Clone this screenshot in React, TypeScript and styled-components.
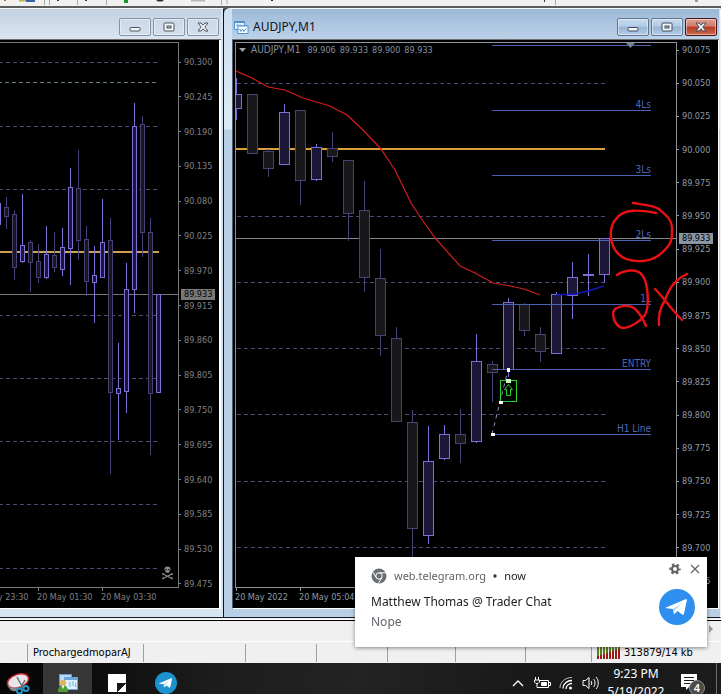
import React from "react";
import styled, { createGlobalStyle, css } from "styled-components";

const chartFont = '"DejaVu Sans Condensed", "Noto Sans", sans-serif';
const uiFont = '"Noto Sans", "Open Sans", sans-serif';

const GlobalStyle = createGlobalStyle`
  *, *::before, *::after { box-sizing: border-box; }
  html, body { margin: 0; padding: 0; }
  body { font-family: ${uiFont}; background: #f0f0f0; }
  button { font: inherit; padding: 0; margin: 0; border: 0; background: none; cursor: pointer; }
`;

const Desktop = styled.div`
  display: flex;
  flex-direction: column;
  width: 100%;
  height: 100vh;
  overflow: hidden;
`;

const Toolbar = styled.header`
  flex: 0 0 8px;
  display: flex;
  align-items: flex-start;
  overflow: hidden;
  background: #f1f1ef;
  border-bottom: 2px solid #5c5c5c;
  svg { display: block; flex: none; }
`;

const Workspace = styled.main`
  flex: 1;
  min-height: 0;
  display: grid;
  grid-template-columns: 224fr 497fr;
  grid-template-rows: minmax(0, 1fr);
  background: #44525f;
`;

const ChartWindow = styled.section<{ $active?: boolean }>`
  position: relative;
  min-width: 0;
  display: flex;
  flex-direction: column;
  border-bottom: 1px solid #1b2024;
  ${(p) =>
    p.$active
      ? css`
          padding: 0 1px 8px 8px;
          background: linear-gradient(#cfdff0 0, #dce9f5 120px, #b9cfe6 121px, #b9cfe6 100%);
          border-top-left-radius: 6px;
          border-top: 1px solid #f5f9fd;
          border-right: 1px solid #f4f4f4;
        `
      : css`
          padding: 0 2px 8px 0;
          background: #d7e4f1;
          border-right: 1px solid #101418;
          border-top: 1px solid #f5f9fd;
        `}
`;

const TitleBar = styled.header<{ $active?: boolean }>`
  flex: 0 0 31px;
  display: flex;
  align-items: center;
  gap: 4px;
  min-width: 0;
  padding: 4px 2px 0 2px;
  background: ${(p) =>
    p.$active ? "linear-gradient(#9db9d8, #bdd2ea)" : "linear-gradient(#c3d1e1, #dbe6f2)"};
`;

const Title = styled.h1`
  flex: 1;
  margin: 0;
  font-size: 12px;
  line-height: 16px;
  font-weight: 400;
  color: #10161c;
  white-space: nowrap;
`;

const WindowButtons = styled.div`
  display: flex;
  gap: 2px;
  margin-left: auto;
`;

const WindowButton = styled.button<{ $tone: "idle" | "blue" | "red" }>`
  display: flex;
  align-items: center;
  justify-content: center;
  width: 32px;
  height: 18px;
  border-radius: 2px;
  border: 1px solid ${(p) => (p.$tone === "red" ? "#4b1715" : p.$tone === "blue" ? "#5f7690" : "#8493a8")};
  box-shadow: inset 0 0 0 1px rgba(255, 255, 255, 0.45);
  background: ${(p) =>
    p.$tone === "red"
      ? "linear-gradient(#e0a093 0, #d07c6b 45%, #b93a24 50%, #cd6a50 100%)"
      : p.$tone === "blue"
      ? "linear-gradient(#c5d9ee 0, #b4cce6 45%, #98b5d5 50%, #b3cde8 100%)"
      : "linear-gradient(#ccd8e7, #d3dfed)"};
`;

const ChartBody = styled.div<{ $active?: boolean }>`
  position: relative;
  flex: 1;
  min-height: 0;
  display: grid;
  grid-template-columns: minmax(0, 1fr) ${(p) => (p.$active ? "41px" : "40px")};
  grid-template-rows: minmax(0, 1fr);
  background: #000;
  border-right: ${(p) => (p.$active ? "1px" : "2px")} solid #fff;
  border-bottom: 1px solid #fff;
  border-left: ${(p) => (p.$active ? "1px solid #4c5b6a" : "0")};
  box-shadow: 0 -1px 0 #6f6f6f;
  color: ${(p) => (p.$active ? "#909ba6" : "#808080")};
  font-family: ${chartFont};
  font-size: 9px;
  line-height: 12px;
`;

const PlotColumn = styled.div<{ $active?: boolean }>`
  min-width: 0;
  display: flex;
  flex-direction: column;
  padding: 2px 0 0 ${(p) => (p.$active ? "2px" : "0")};
`;

const Plot = styled.div<{ $active?: boolean }>`
  position: relative;
  flex: 1;
  min-height: 0;
  border: 1px solid ${(p) => (p.$active ? "#8c949a" : "#777")};
  border-left-width: ${(p) => (p.$active ? "1px" : "0")};
`;

const PlotDrawing = styled.svg`
  display: block;
  width: 100%;
  height: 100%;
`;

const QuoteLine = styled.div`
  position: absolute;
  top: 1px;
  left: 3px;
  display: flex;
  align-items: center;
  gap: 5px;
  color: #8492a2;
  white-space: nowrap;
`;

const QuoteName = styled.span`
  font-size: 10px;
`;

const QuoteValues = styled.span`
  display: flex;
  gap: 4px;
  padding-left: 2px;
`;

const TimeAxis = styled.div<{ $active?: boolean }>`
  flex: 0 0 20px;
  display: flex;
  overflow: hidden;
  justify-content: ${(p) => (p.$active ? "flex-start" : "flex-end")};
  padding-right: ${(p) => (p.$active ? "0" : "14px")};
`;

const TimeLabel = styled.time`
  position: relative;
  flex: 0 0 64px;
  padding-top: 3px;
  white-space: nowrap;
  &::before {
    content: "";
    position: absolute;
    top: 0;
    left: 1px;
    width: 1px;
    height: 3px;
    background: currentColor;
  }
`;

const PriceAxis = styled.ol<{ $active?: boolean }>`
  position: relative;
  display: flex;
  flex-direction: column;
  justify-content: space-between;
  margin: 0;
  padding: ${(p) => (p.$active ? "4px 0 21px" : "16px 0 18px")};
  list-style: none;
`;

const PriceLabel = styled.li`
  display: flex;
  align-items: center;
  gap: 3px;
  &::before {
    content: "";
    width: 2px;
    height: 1px;
    background: currentColor;
  }
`;

const PriceTag = styled.li<{ $active?: boolean }>`
  position: absolute;
  left: 2px;
  top: ${(p) => (p.$active ? "34%" : "43.8%")};
  width: 34px;
  height: 11px;
  padding-left: 3px;
  line-height: 11px;
  color: #000;
  background: ${(p) => (p.$active ? "#8895a3" : "#777")};
`;

const Overlay = styled.svg`
  position: absolute;
  inset: 0;
  width: 100%;
  height: 100%;
  pointer-events: none;
`;

const TabStrip = styled.div`
  flex: 0 0 23px;
  display: flex;
  align-items: center;
  justify-content: flex-end;
  padding: 0 8px 2px 0;
  background: #efefef;
  border-top: 1px solid #e4edf4;
  box-shadow: inset 0 1px 0 #fff, inset 0 2px 0 #000;
`;

const StatusBar = styled.footer`
  flex: 0 0 22px;
  display: flex;
  padding: 2px 0 1px;
  border-top: 1px solid #fff;
  background: #f0f0f0;
  font-family: ${chartFont};
  font-size: 11px;
  line-height: 18px;
  color: #000;
`;

const StatusCell = styled.div<{ $width?: number }>`
  flex: ${(p) => (p.$width ? `0 1 ${p.$width}px` : "1 0 auto")};
  min-width: 0;
  display: flex;
  align-items: center;
  gap: 4px;
  padding-left: 5px;
  white-space: nowrap;
  border-right: ${(p) => (p.$width ? "1px solid #a0a0a0" : "0")};
`;

const Taskbar = styled.nav`
  flex: 0 0 31px;
  display: flex;
  overflow: hidden;
  color: #fff;
  background: linear-gradient(100deg, #050505 0, #0c0c0c 12%, #1d1d1d 30%, #232323 50%, #181818 75%, #1c1c1c 100%);
`;

const TaskButton = styled.button<{ $open?: boolean }>`
  flex: 0 0 49px;
  height: 40px;
  display: flex;
  align-items: center;
  justify-content: center;
  background: ${(p) => (p.$open ? "#373737" : "transparent")};
  &:first-child { flex-basis: 43px; padding-right: 8px; }
`;

const Tray = styled.div`
  flex: none;
  height: 40px;
  display: flex;
  align-items: center;
  margin-left: auto;
  padding-right: 4px;
`;

const TrayButton = styled.button<{ $width: number }>`
  width: ${(p) => p.$width}px;
  height: 40px;
  display: flex;
  align-items: center;
  justify-content: center;
`;

const Clock = styled.button`
  width: 68px;
  height: 40px;
  display: flex;
  flex-direction: column;
  align-items: center;
  justify-content: center;
  color: #fff;
  && { font-size: 12px; line-height: 18px; }
`;

const ShowDesktop = styled.button`
  width: 1px;
  height: 40px;
  && { background: #6b6b6b; }
`;

const Toast = styled.aside`
  position: fixed;
  right: 14px;
  bottom: 47px;
  width: 352px;
  display: grid;
  grid-template-columns: 1fr 36px;
  grid-template-rows: 34px 20px 20px;
  padding: 1px 12px 15px 16px;
  background: #fff;
  box-shadow: 0 1px 4px rgba(0, 0, 0, 0.45);
  font-size: 12px;
  line-height: 20px;
  color: #5f6368;
`;

const ToastHead = styled.div`
  grid-column: 1 / -1;
  display: flex;
  align-items: center;
  gap: 7px;
  padding-top: 2px;
  font-size: 11px;
`;

const Now = styled.span`
  color: #202124;
`;

const ToastActions = styled.div`
  position: absolute;
  top: 6px;
  right: 6px;
  display: flex;
  gap: 8px;
  button { display: flex; }
`;

const ToastTitle = styled.strong`
  grid-column: 1;
  grid-row: 2;
  font-weight: 400;
  color: #202124;
`;

const ToastText = styled.span`
  grid-column: 1;
  grid-row: 3;
`;

const ToastAvatar = styled.div`
  grid-column: 2;
  grid-row: 2 / span 2;
  margin-top: -3px;
  svg { display: block; }
`;

type Candle = [x: number, high: number, top: number, bottom: number, low: number, rising: 0 | 1];

const hourCandles: Candle[] = [
  [-1.5, 203, 203, 224, 224, 1],
  [6.5, 197, 207, 216, 229, 0],
  [14.5, 210, 214, 267, 280, 0],
  [22.5, 194, 245, 261, 263, 1],
  [30.5, 240, 242, 262, 292, 0],
  [38.5, 244, 261, 277, 283, 0],
  [46.5, 226, 254, 277, 279, 1],
  [54.5, 232, 255, 267, 272, 0],
  [62.5, 228, 247, 269, 276, 1],
  [70.5, 168, 187, 248, 285, 1],
  [78.5, 150, 188, 240, 260, 0],
  [86.5, 226, 239, 281, 296, 0],
  [94.5, 246, 275, 282, 323, 1],
  [102.5, 199, 242, 277, 277, 1],
  [110.5, 218, 240, 392, 474, 0],
  [118.5, 343, 388, 393, 440, 1],
  [126.5, 263, 289, 391, 413, 1],
  [134.5, 103, 126, 289, 313, 1],
  [142.5, 116, 124, 232, 257, 0],
  [150.5, 218, 232, 393, 455, 0],
  [158.5, 294, 294, 392, 392, 1],
];

const minuteCandles: Candle[] = [
  [236.5, 78, 94, 108, 120, 1],
  [252.5, 94, 94, 153, 153, 0],
  [268.5, 149, 151, 168, 177, 0],
  [284.5, 104, 112, 164, 164, 1],
  [300.5, 110, 110, 180, 205, 0],
  [316.5, 144, 147, 179, 181, 1],
  [332.5, 132, 148, 156, 162, 0],
  [348.5, 160, 160, 213, 241, 0],
  [364.5, 181, 210, 277, 292, 0],
  [380.5, 249, 278, 335, 356, 0],
  [396.5, 327, 338, 421, 421, 0],
  [412.5, 410, 422, 528, 570, 0],
  [428.5, 426, 461, 535, 544, 1],
  [444.5, 425, 434, 458, 460, 1],
  [460.5, 409, 434, 443, 463, 0],
  [476.5, 334, 361, 441, 443, 1],
  [492.5, 361, 364, 372, 402, 0],
  [508.5, 298, 302, 369, 377, 1],
  [524.5, 303, 304, 330, 336, 0],
  [540.5, 327, 334, 351, 362, 0],
  [556.5, 292, 294, 353, 353, 1],
  [572.5, 262, 277, 295, 319, 1],
  [588.5, 254, 274, 275, 296, 1],
  [604.5, 238, 238, 274, 283, 1],
];

const hourPrices = ["90.300", "90.245", "90.190", "90.135", "90.080", "90.025", "89.970", "89.915", "89.860", "89.805", "89.750", "89.695", "89.640", "89.585", "89.530", "89.475"];
const minutePrices = ["90.075", "90.050", "90.025", "90.000", "89.975", "89.950", "89.925", "89.900", "89.875", "89.850", "89.825", "89.800", "89.775", "89.750", "89.725", "89.700", "89.675"];

const levels: [y: number, label: string][] = [
  [45, ""],
  [110, "4Ls"],
  [175, "3Ls"],
  [240, "2Ls"],
  [304, "1L"],
  [369, "ENTRY"],
  [434, "H1 Line"],
];

function Candles({ items, half }: { items: Candle[]; half: number }) {
  return (
    <g shapeRendering="crispEdges">
      {items.map(([x, high, top, bottom, low, rising]) => {
        const stroke = rising ? "#7c6fd6" : "#474175";
        return (
          <g key={x} stroke={stroke} fill={rising ? "#1a1738" : "#18171c"}>
            <line x1={x} x2={x} y1={high} y2={low} />
            <rect x={x - half} y={top + 0.5} width={half * 2} height={bottom - top} />
          </g>
        );
      })}
    </g>
  );
}

function Grid({ rows, x1, x2 }: { rows: number[]; x1: number; x2: number }) {
  return (
    <g stroke="#4e4a72" strokeDasharray="4 3" shapeRendering="crispEdges">
      {rows.map((y) => (
        <line key={y} x1={x1} x2={x2} y1={y + 0.5} y2={y + 0.5} />
      ))}
    </g>
  );
}

function Glyph({ kind, bright }: { kind: "min" | "max" | "close"; bright?: boolean }) {
  const line = bright ? "#3a4a5c" : "#4c545f";
  return (
    <svg width="12" height="10" viewBox="0 0 12 10" fill="#f4f7fa" stroke={line} aria-hidden="true">
      {kind === "min" && <rect x="1" y="5.5" width="10" height="3.5" rx="1" />}
      {kind === "max" && (
        <>
          <rect x="1" y="1" width="10" height="8" rx="1" />
          <rect x="4" y="4" width="4" height="2" fill="#b8c8da" />
        </>
      )}
      {kind === "close" && (
        <path d="M1 1h3l2 2.2L8 1h3L7.8 5 11 9H8L6 6.8 4 9H1l3.2-4z" />
      )}
    </svg>
  );
}

function Buttons({ active }: { active?: boolean }) {
  return (
    <WindowButtons>
      <WindowButton $tone={active ? "blue" : "idle"} aria-label="Minimize"><Glyph kind="min" bright={active} /></WindowButton>
      <WindowButton $tone={active ? "blue" : "idle"} aria-label="Maximize"><Glyph kind="max" bright={active} /></WindowButton>
      <WindowButton $tone={active ? "red" : "idle"} aria-label="Close"><Glyph kind="close" bright={active} /></WindowButton>
    </WindowButtons>
  );
}

function Axis({ prices, active }: { prices: string[]; active?: boolean }) {
  return (
    <PriceAxis $active={active}>
      {prices.map((p) => <PriceLabel key={p}>{p}</PriceLabel>)}
      <PriceTag $active={active}>89.933</PriceTag>
    </PriceAxis>
  );
}

function HourChart() {
  return (
    <ChartWindow aria-label="Hourly chart">
      <TitleBar><Buttons /></TitleBar>
      <ChartBody>
        <PlotColumn>
          <Plot>
            <PlotDrawing viewBox="0 43 178 544" preserveAspectRatio="none" role="img" aria-label="Candlesticks">
              <Grid rows={[62, 126, 189, 315, 378, 441, 504, 568]} x1={-1} x2={159} />
              <line x1="-2" x2="159" y1="82.5" y2="82.5" stroke="#66808c" strokeDasharray="4 3" shapeRendering="crispEdges" />
              <line x1="0" x2="159" y1="252" y2="252" stroke="#d0a04e" strokeWidth="2" />
              <line x1="0" x2="178" y1="294.5" y2="294.5" stroke="#777" />
              <Candles items={hourCandles} half={2} />
              <g fill="#8c8c8c">
                <path d="M167.500 566.500c-2 0-3 1.200-3 2.800 0 1 .5 1.700 1.200 2.100v1.300h3.600v-1.300c.7-.4 1.200-1.100 1.200-2.100 0-1.600-1-2.800-3-2.800z" />
                <path d="M163 574l9 4.500M172 574l-9 4.500" stroke="#8c8c8c" strokeWidth="1.300" />
                <path d="M162.300 573.300h1.700v1.700h-1.700zM171 573.300h1.700v1.700H171zM162.300 577.500h1.700v1.700h-1.700zM171 577.500h1.700v1.700H171z" />
                <path d="M165.500 569h1.300v1.300h-1.300zM168.200 569h1.300v1.300h-1.300z" fill="#000" />
              </g>
            </PlotDrawing>
          </Plot>
          <TimeAxis>
            <TimeLabel>19 May 23:30</TimeLabel>
            <TimeLabel>20 May 01:30</TimeLabel>
            <TimeLabel>20 May 03:30</TimeLabel>
          </TimeAxis>
        </PlotColumn>
        <Axis prices={hourPrices} />
      </ChartBody>
    </ChartWindow>
  );
}

function MinuteChart() {
  return (
    <ChartWindow $active aria-label="AUDJPY,M1">
      <TitleBar $active>
        <svg width="15" height="14" viewBox="0 0 15 14" aria-hidden="true">
          <path d="M.5 1.500h10v8H.5z" fill="#e9f4fd" stroke="#4e8fce" />
          <path d="M1 2.500h9M2.500 6l1-1.500 1.500 2 1-2" stroke="#4e8fce" fill="none" />
          <path d="M4 5.500h10v8H4z" fill="#fff" stroke="#4e8fce" />
          <path d="M4 6h10" stroke="#78aee0" strokeWidth="1.500" />
          <path d="M5.500 9l1.500 2.500L8.500 9l1.500 2.500L12 8.500" stroke="#4e8fce" fill="none" />
        </svg>
        <Title>AUDJPY,M1</Title>
        <Buttons active />
      </TitleBar>
      <ChartBody $active>
        <PlotColumn $active>
          <Plot $active>
            <PlotDrawing viewBox="236 43 440 544" preserveAspectRatio="none" role="img" aria-label="Candlesticks">
              <Grid rows={[83, 216, 282, 348, 414, 481, 547]} x1={237} x2={605} />
              <line x1="236" x2="605" y1="149" y2="149" stroke="#d9a136" strokeWidth="2" />
              <line x1="236" x2="676" y1="238.500" y2="238.500" stroke="#7f878c" />
              <Candles items={minuteCandles} half={5} />
              <g stroke="#4a62b0" shapeRendering="crispEdges">
                {levels.map(([y]) => <line key={y} x1="492" x2="651" y1={y + 0.5} y2={y + 0.5} />)}
              </g>
              <g fill="#4c68b8" fontFamily={chartFont} fontSize="10" textAnchor="end">
                {levels.map(([y, label]) => <text key={y} x="651" y={y - 2}>{label}</text>)}
              </g>
              <path d="M626 43h9l-4.500 5z" fill="#7b838a" />
              <polyline
                points="236,71 252,78 268,87 285,90 303,98 330,106 347,115 362,129 381,149 395,170 411,203 423,221 436,239 460,266 475,273 493,283 508,285.500 524,289 540,295"
                fill="none" stroke="#d61c1c" strokeWidth="1.200"
              />
              <polyline points="556,295 575,294 588,291 604,286" fill="none" stroke="#1818b8" strokeWidth="1.500" />
              <path d="M492 434L508 370" stroke="#8f8cc0" strokeDasharray="4 4" />
              <g fill="none" stroke="#27d327" shapeRendering="crispEdges">
                <rect x="500.500" y="380.500" width="16" height="21" />
              </g>
              <path d="M508.500 384.500l-4 5h2v6h4v-6h2z" fill="none" stroke="#27d327" />
              <rect x="506" y="379" width="5" height="4" fill="#c9ffc9" />
              <g fill="#fff">
                <rect x="507" y="368" width="3" height="4" />
                <rect x="499" y="401" width="4" height="3" />
                <rect x="491" y="433" width="4" height="3" />
              </g>
            </PlotDrawing>
            <QuoteLine>
              <svg width="7" height="4" viewBox="0 0 7 4" aria-hidden="true"><path d="M0 0h7L3.500 4z" fill="#9aa3ab" /></svg>
              <QuoteName>AUDJPY,M1</QuoteName>
              <QuoteValues>
                <span>89.906</span>
                <span>89.933</span>
                <span>89.900</span>
                <span>89.933</span>
              </QuoteValues>
            </QuoteLine>
          </Plot>
          <TimeAxis $active>
            <TimeLabel>20 May 2022</TimeLabel>
            <TimeLabel>20 May 05:04</TimeLabel>
          </TimeAxis>
        </PlotColumn>
        <Axis prices={minutePrices} active />
        <Overlay viewBox="233 40 485 568" preserveAspectRatio="none" aria-hidden="true">
          <g fill="none" stroke="#ea1014" strokeWidth="2.400" strokeLinecap="round" strokeLinejoin="round">
            <path d="M633 203C644 205 653 205 659 209C667 216 671 219 672 227C672 236 672 241 669 245C662 254 655 260 643 261C627 262 618 256 614 248C609 239 610 225 616 219C624 208 640 210 656 213" />
            <path d="M617 275C624 270 637 268 642 275C648 282 650 305 645 315C639 323 629 328 622 328C614 325 611 314 615 309C621 305 629 305 634 308C639 312 643 319 646 326" />
            <path d="M655 289C664 298 670 308 682 320M687 274C672 281 668 292 665 300C660 308 658 316 659 325" />
          </g>
        </Overlay>
      </ChartBody>
    </ChartWindow>
  );
}

function Plane({ size, color }: { size: number; color: string }) {
  return (
    <svg width={size} height={size} viewBox="0 0 36 36" aria-hidden="true">
      <circle cx="18" cy="18" r="18" fill={color} />
      <path d="M7 18.500L26.500 10.300c1-.4 1.500.1 1.300 1.200L25 24.700c-.2 1-.9 1.300-1.800.8l-4.700-3.400-2.500 2.500c-.7.700-1.300.4-1.400-.5l-.8-4.200-6.500-.7c-.9-.1-.9-.5-.3-.7z" fill="#fff" />
      <path d="M13.800 20l9.500-6.300-7.200 7.400-.7 3.500z" fill={color} opacity="0.350" />
    </svg>
  );
}

const statusWidths = [102, 71, 71, 68, 70, 66];

export default function App() {
  return (
    <Desktop>
      <GlobalStyle />
      <Toolbar>
        <svg width="721" height="6" viewBox="0 0 721 6" aria-hidden="true">
          <path d="M4 0h2v1H4z" fill="#d05a3a" />
          <path d="M19 0h7v1.500h-7z" fill="#c2b53c" />
          <path d="M26 0h9v2h-9z" fill="#3d5dae" />
          <path d="M44.500 0v5M49.500 0v5M77.500 0v5M106.500 0v5M221.500 0v5M555.500 0v5" stroke="#a9a9a9" />
          <path d="M124 0h4v3h-4z" fill="#169a25" />
          <path d="M156 0h8l-2 1.500h-4z" fill="#26303e" />
          <path d="M191 0h14v1.500h-14z" fill="#b9b9b9" />
          <path d="M57 0h2v1h-2zM85 0h2v1h-2zM271 0h2v1h-2zM544 0h1v2h-1z" fill="#333" />
          <path d="M226 1h2M226 3h2" stroke="#aaa" />
          <path d="M695 0h3v2h-3z" fill="#999" />
        </svg>
      </Toolbar>
      <Workspace>
        <HourChart />
        <MinuteChart />
      </Workspace>
      <TabStrip>
        <svg width="4" height="8" viewBox="0 0 4 8" aria-hidden="true"><path d="M0 0l4 4-4 4z" fill="#999" /></svg>
      </TabStrip>
      <StatusBar>
        <StatusCell $width={28} />
        <StatusCell $width={116}>ProchargedmoparAJ</StatusCell>
        {statusWidths.map((w, i) => <StatusCell key={i} $width={w} />)}
        <StatusCell>
          <svg width="23" height="12" viewBox="0 0 23 12" shapeRendering="crispEdges" aria-hidden="true">
            {[0, 1, 2, 3, 4, 5, 6, 7].map((i) => (
              <g key={i}>
                <rect x={i * 3} y="0" width="2" height={9 - i} fill="#5b7d22" />
                <rect x={i * 3} y={9 - i} width="2" height={3 + i} fill="#9c1c18" />
              </g>
            ))}
          </svg>
          <span>313879/14 kb</span>
        </StatusCell>
      </StatusBar>
      <Taskbar>
        <TaskButton aria-label="Snipping Tool">
          <svg width="26" height="24" viewBox="0 0 26 24" aria-hidden="true">
            <ellipse cx="13" cy="10" rx="11" ry="6.500" transform="rotate(-20 13 10)" fill="#e8e6e8" stroke="#c3262f" strokeWidth="1.500" />
            <path d="M3 13c2 4 6 5 10 3l-2 4c-4 1-8-2-8-7z" fill="#8d8588" />
            <path d="M12 6l6 11M20 9l-5 9" stroke="#66737c" strokeWidth="1.500" />
            <circle cx="14.500" cy="20" r="2.500" fill="none" stroke="#2496c8" strokeWidth="2" />
            <circle cx="21" cy="17.500" r="2.500" fill="none" stroke="#2496c8" strokeWidth="2" />
          </svg>
        </TaskButton>
        <TaskButton $open aria-label="Trading terminal">
          <svg width="22" height="22" viewBox="0 0 22 22" aria-hidden="true">
            <rect x="2.500" y="2.500" width="12" height="11" fill="#b8daf4" stroke="#5f9bd4" />
            <rect x="7.500" y="5.500" width="13" height="12" fill="#dceffc" stroke="#6aa5da" />
            <path d="M8 7h12" stroke="#6aa5da" strokeWidth="2" />
            <path d="M13 10v5M16 9v5M18.500 11v4" stroke="#74add8" />
            <circle cx="6" cy="11" r="3" fill="#e5b24e" />
            <path d="M1 20c0-5 2-6.500 5-6.500s5 1.500 5 6.500z" fill="#4e9e35" />
            <path d="M4.500 13.500h3L6 17z" fill="#fff" />
          </svg>
        </TaskButton>
        <TaskButton aria-label="Sticky Notes">
          <svg width="18" height="18" viewBox="0 0 18 18" aria-hidden="true">
            <path d="M0 0h18v18H0z" fill="#fff" />
            <path d="M9 18V9h9z" fill="#161616" /><path d="M18 9v9H9z" fill="#fff" /><path d="M9 18L18 9" stroke="#161616" />
          </svg>
        </TaskButton>
        <TaskButton aria-label="Telegram"><Plane size={22} color="#1c93cf" /></TaskButton>
        <Tray>
          <TrayButton $width={24} aria-label="Show hidden icons">
            <svg width="12" height="7" viewBox="0 0 12 7" aria-hidden="true"><path d="M1 6l5-5 5 5" fill="none" stroke="#fff" strokeWidth="1.300" /></svg>
          </TrayButton>
          <TrayButton $width={24} aria-label="Battery">
            <svg width="17" height="12" viewBox="0 0 17 12" fill="none" stroke="#fff" aria-hidden="true">
              <path d="M6 3.500h8.500v7H5" /><path d="M15 5.500h1.500v3H15" />
              <path d="M7.500 5.500h5v3h-5z" fill="#fff" />
              <path d="M1.500 0v3M4.500 0v3M.5 3h5v2L4 6.500H2L.5 5zM3 6.500V10.500h3" />
            </svg>
          </TrayButton>
          <TrayButton $width={24} aria-label="Network">
            <svg width="14" height="14" viewBox="0 0 14 14" fill="none" stroke="#fff" aria-hidden="true">
              <path d="M1 12C1 6 6 1.500 13 1.500" opacity="0.700" />
              <path d="M4 12.500C4 8 8 4.500 13 4.500M7 13c0-3 2.500-5.500 6-5.500" strokeWidth="1.300" />
              <circle cx="11.500" cy="12" r="1.500" fill="#fff" stroke="none" />
            </svg>
          </TrayButton>
          <TrayButton $width={24} aria-label="Volume">
            <svg width="17" height="14" viewBox="0 0 17 14" fill="none" stroke="#fff" aria-hidden="true">
              <path d="M1 4.500h2.500L7 1.500v11L3.500 9.500H1z" />
              <path d="M9 5c1 1 1 3 0 4M11.500 3c2 2 2 6 0 8M14 1c3 3 3 9 0 12" />
            </svg>
          </TrayButton>
          <Clock>
            <time>9:23 PM</time>
            <time>5/19/2022</time>
          </Clock>
          <TrayButton $width={46} aria-label="4 notifications">
            <svg width="26" height="24" viewBox="0 0 26 24" aria-hidden="true">
              <path d="M1 3h16v13H9l-3 3v-3H1z" fill="#fff" />
              <path d="M4 6.500h10M4 9.500h10M4 12.500h6" stroke="#1c1c1c" />
              <circle cx="17" cy="17" r="7.500" fill="#4b4b4b" stroke="#8a8a8a" />
              <text x="17" y="21" fontSize="11" fontWeight="600" fontFamily={uiFont} textAnchor="middle" fill="#fff">4</text>
            </svg>
          </TrayButton>
          <ShowDesktop aria-label="Show desktop" />
        </Tray>
      </Taskbar>
      <Toast role="alert">
        <ToastHead>
          <svg width="16" height="16" viewBox="0 0 16 16" aria-hidden="true">
            <circle cx="8" cy="8" r="7.500" fill="#6b6e72" />
            <circle cx="8" cy="8" r="3.200" fill="#6b6e72" stroke="#fff" />
            <path d="M8 4.800h6.800M5.200 9.600L1.900 3.900M10.800 9.600L7.400 15.400" stroke="#fff" />
          </svg>
          <span>web.telegram.org</span>
          <svg width="4" height="4" viewBox="0 0 4 4" aria-hidden="true"><circle cx="2" cy="2" r="1.700" fill="#333" /></svg>
          <Now>now</Now>
        </ToastHead>
        <ToastTitle>Matthew Thomas @ Trader Chat</ToastTitle>
        <ToastText>Nope</ToastText>
        <ToastAvatar><Plane size={36} color="#2f8fee" /></ToastAvatar>
        <ToastActions>
          <button aria-label="Notification settings">
            <svg width="12" height="12" viewBox="0 0 12 12" fill="none" stroke="#5f6368" aria-hidden="true">
              <circle cx="6" cy="6" r="3" strokeWidth="2" />
              <circle cx="6" cy="6" r="4.800" strokeWidth="1.800" strokeDasharray="2.500 2.527" strokeDashoffset="1.250" />
            </svg>
          </button>
          <button aria-label="Close notification">
            <svg width="12" height="12" viewBox="0 0 12 12" aria-hidden="true"><path d="M2 2l8 8M10 2l-8 8" stroke="#5f6368" strokeWidth="1.200" /></svg>
          </button>
        </ToastActions>
      </Toast>
    </Desktop>
  );
}
